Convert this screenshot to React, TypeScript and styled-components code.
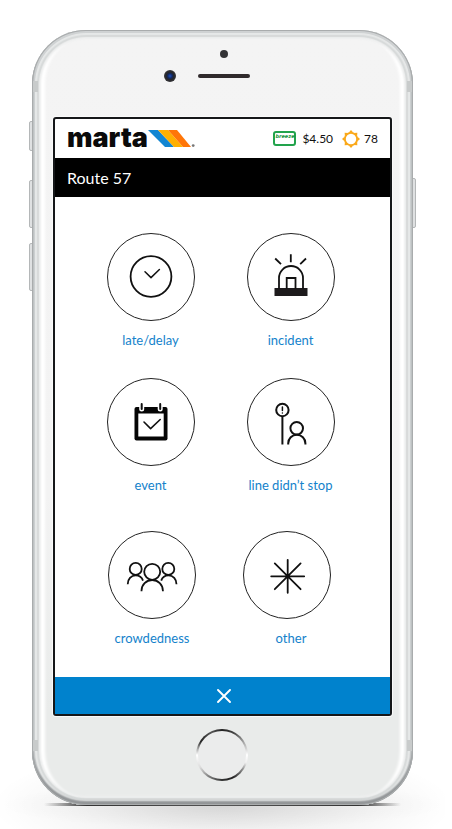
import React from "react";
import styled, { createGlobalStyle, css } from "styled-components";

const GlobalStyle = createGlobalStyle`
  *, *::before, *::after { box-sizing: border-box; }
  body { margin: 0; background: #fff; }
`;

const sans = css`
  font-family: Lato, "Open Sans", sans-serif;
`;

const Page = styled.div`
  ${sans}
  display: flex;
  justify-content: center;
  padding: 30px 39px 24px 32px;
  overflow: hidden;
`;

const Phone = styled.div`
  position: relative;
  flex: 1;
  max-width: 440px;

  &::before {
    content: "";
    position: absolute;
    inset: auto -32px -24px -32px;
    height: 90px;
    background:
      radial-gradient(ellipse 50% 24px at 50% 66px, rgba(0, 0, 0, 0.07), transparent) 0 0 / 100% 100% no-repeat,
      radial-gradient(ellipse 52% 60px at 50% 66px, rgba(0, 0, 0, 0.1), transparent);
  }

  &::after {
    content: "";
    position: absolute;
    inset: auto 12px -1px 12px;
    height: 3px;
    background: linear-gradient(90deg, transparent, #333 12%, #555 50%, #333 88%, transparent);
  }
`;

const SideButton = styled.span<{ $top: number; $length: number; $right?: boolean }>`
  position: absolute;
  top: ${(p) => p.$top}px;
  ${(p) => (p.$right ? "right" : "left")}: -3px;
  width: 5px;
  height: ${(p) => p.$length}px;
  border: 1px solid #b4b7b8;
  border-radius: 2px;
  background: #dfe1e2;
`;

const Shell = styled.div`
  position: relative;
  z-index: 1;
  padding: 0 21px;
  border-radius: 54px;
  background: linear-gradient(#f4f4f4 0, #f3f3f3 60%, #e9ebea 88%);
  box-shadow:
    inset 0 0 0 1px #a9acad,
    inset 0 -3px 2px 1px #929597,
    inset 0 0 0 3px #cfd2d3,
    inset 0 0 1px 5px #e6e8e8,
    inset 0 0 1px 7px #d6d9d9,
    inset 0 0 2px 9px #eeefef,
    inset 10px 0 3px 3px #fff,
    inset -10px 0 3px 3px #fff;
`;

const Antenna = styled.span<{ $right?: boolean; $bottom?: boolean }>`
  position: absolute;
  ${(p) => (p.$bottom ? "bottom: 54px" : "top: 51px")};
  ${(p) => (p.$right ? "right" : "left")}: 1px;
  width: 5px;
  height: 11px;
  background: #c8cbcb;
`;

const TopBezel = styled.div`
  display: flex;
  flex-direction: column;
  align-items: center;
  gap: 12px;
  height: 87px;
  padding: 20px 0 0 2px;
`;

const Sensor = styled.span`
  width: 8px;
  height: 8px;
  border-radius: 50%;
  background: #333336;
`;

const SpeakerRow = styled.div`
  display: grid;
  grid-template-columns: 1fr 52px 1fr;
  align-items: center;
  gap: 22px;
  width: 100%;
`;

const Camera = styled.span`
  justify-self: end;
  width: 12px;
  height: 12px;
  border-radius: 50%;
  background: radial-gradient(circle, #1f4fc0 0, #12285f 28%, #26262a 45%, #46464a 100%);
`;

const Speaker = styled.span`
  height: 4px;
  border-radius: 2px;
  background: #302a2c;
`;

const Screen = styled.div`
  display: flex;
  flex-direction: column;
  border: 2px solid #151719;
  border-radius: 3px;
  background: #fff;
  box-shadow: 0 0 0 1px #fafafa;
`;

const Header = styled.header`
  display: flex;
  align-items: center;
  justify-content: space-between;
  height: 39px;
  padding: 0 12px;
`;

const Brand = styled.div`
  display: flex;
  align-items: center;
`;

const BrandName = styled.span`
  font: 900 27px/34px Inter, "Liberation Sans", sans-serif;
  color: #0a0a0a;
  height: 36px;
`;

const Status = styled.div`
  display: flex;
  align-items: center;
  gap: 9px;
  font-size: 12px;
  line-height: 20px;
  color: #111;
`;

const Reading = styled.span<{ $gap: number }>`
  display: flex;
  align-items: center;
  gap: ${(p) => p.$gap}px;
`;

const BreezeCard = styled.span`
  width: 23px;
  height: 15px;
  border: 2px solid #22a34c;
  border-radius: 3px;
  font: italic 700 5px/7px "DejaVu Sans", sans-serif;
  text-align: center;
  color: #15953d;
`;

const RouteBar = styled.h1`
  margin: 0;
  padding: 0 12px;
  background: #000;
  color: #fff;
  font-size: 16px;
  font-weight: 400;
  line-height: 39px;
`;

const Main = styled.main`
  display: flex;
  flex-direction: column;
  align-items: center;
  gap: 28px;
  min-height: 480px;
  padding: 36px 4px 28px 0;
`;

const Row = styled.div<{ $close?: boolean }>`
  display: flex;
  gap: ${(p) => (p.$close ? 47 : 52)}px;
  padding: ${(p) => (p.$close ? "8px 2px 0 0" : "0")};
`;

const Report = styled.button<{ $wide?: boolean }>`
  ${sans}
  display: flex;
  flex-direction: column;
  align-items: ${(p) => (p.$wide ? "flex-start" : "center")};
  gap: 9px;
  width: 88px;
  padding: 0;
  border: 0;
  background: none;
  cursor: pointer;
`;

const Disc = styled.span`
  display: grid;
  place-items: center;
  width: 88px;
  height: 88px;
  border: 1px solid #222;
  border-radius: 50%;
`;

const Label = styled.span<{ $wide?: boolean }>`
  width: ${(p) => (p.$wide ? "96px" : "auto")};
  text-align: center;
  white-space: nowrap;
  font-size: 13px;
  line-height: 20px;
  color: #1482cb;
`;

const CloseBar = styled.button`
  display: grid;
  place-items: center;
  height: 37px;
  padding: 0 0 0 2px;
  border: 0;
  background: #0082cd;
  cursor: pointer;
`;

const BottomBezel = styled.div`
  display: flex;
  justify-content: center;
  height: 89px;
  padding: 13px 2px 0 0;
`;

const HomeButton = styled.button`
  width: 52px;
  height: 52px;
  padding: 0;
  border: 2px solid transparent;
  border-radius: 50%;
  background:
    linear-gradient(#ebecec, #ebecec) padding-box,
    conic-gradient(#222 0, #444 8%, #aaa 17%, #fff 25%, #eee 30%, #888 35%, #222 43%, #333 50%, #777 58%, #ddd 67%, #fff 75%, #aaa 79%, #222 84%, #555 93%, #222 100%) border-box;
`;

type IconProps = { children: React.ReactNode };

const Icon = ({ children }: IconProps) => (
  <svg
    width="60"
    height="60"
    viewBox="14 14 60 60"
    fill="none"
    stroke="#111"
    strokeWidth="1.8"
    strokeLinecap="round"
    strokeLinejoin="round"
    aria-hidden="true"
  >
    {children}
  </svg>
);

const LateIcon = () => (
  <Icon>
    <circle cx="44" cy="43.5" r="20.4" />
    <path d="M38 38.8 44 44.6 52.4 36.5" strokeWidth="1.5" />
  </Icon>
);

const IncidentIcon = () => (
  <Icon>
    <path d="M27.5 55h33v8h-33z" fill="#1d1a1c" stroke="none" />
    <path d="M32 55V45a12 12 0 0 1 24 0v10M39.7 55V45h8.8v10" strokeLinejoin="miter" />
    <path d="M28.2 25.5 34 31.2M43.8 21.2v8M59 25.5l-5.8 5.7" strokeLinecap="butt" />
  </Icon>
);

const EventIcon = () => (
  <Icon>
    <rect x="27.5" y="29" width="33" height="33.5" rx="2" fill="#050505" stroke="none" />
    <path d="M31.3 35.5h25.4v23H31.3z" fill="#fff" stroke="none" />
    <path d="M34.7 26v5M53.2 26v5" stroke="#fff" strokeWidth="5" />
    <path d="M34.7 26v5M53.2 26v5" strokeWidth="2" />
    <path d="m37 44 6.6 6.6L53.2 41.5" strokeWidth="1.6" />
  </Icon>
);

const StopIcon = () => (
  <Icon>
    <circle cx="35.4" cy="32" r="6.2" strokeWidth="2" />
    <path d="M35.4 38.2v28.3" strokeLinecap="butt" strokeWidth="2" />
    <path d="M35.4 29v3.4M35.4 34.9v.1" strokeWidth="1.5" />
    <circle cx="49.7" cy="50.3" r="6.3" strokeWidth="2" />
    <path d="M41.2 66.4v-1a8.6 8.6 0 0 1 17.2 0v1" strokeLinecap="butt" strokeWidth="2" />
  </Icon>
);

const CrowdIcon = () => (
  <Icon>
    <circle cx="44.2" cy="40.8" r="8" />
    <circle cx="27.7" cy="37.9" r="6" />
    <circle cx="60.3" cy="37.9" r="6" />
    <path d="M33.5 60.2v-.5a10.7 10.7 0 0 1 21.4 0v.5" strokeLinecap="butt" />
    <path d="M19.7 53.2c0-5 3.4-8.8 8-8.8 3.5 0 6.2 2 7.3 5.2M68.5 53.2c0-5-3.4-8.8-8-8.8-3.5 0-6.2 2-7.3 5.2" strokeLinecap="butt" />
  </Icon>
);

const OtherIcon = () => (
  <Icon>
    <path d="M44.7 28.8v33M28.2 45.3h33M31.8 32.4l25.8 25.8M57.6 32.4 31.8 58.2" />
    <circle cx="44.7" cy="45.3" r="2" fill="#111" stroke="none" />
  </Icon>
);

const BrandStripes = () => (
  <svg width="48" height="18" viewBox="0 0 48 18" aria-hidden="true">
    <path d="M0 0h10l16 17h-9z" fill="#1386d2" />
    <path d="M10 0h10l15 17h-9z" fill="#ffb000" />
    <path d="M20 0h9l14 17h-8z" fill="#ff7608" />
    <circle cx="45.2" cy="15.6" r="1.4" fill="#777" />
  </svg>
);

const rays = [0, 45, 90, 135, 180, 225, 270, 315];

const SunIcon = () => (
  <svg width="18" height="18" viewBox="-9 -9 18 18" aria-hidden="true">
    <circle r="6.1" fill="none" stroke="#faa819" strokeWidth="1.8" />
    {rays.map((angle) => (
      <path key={angle} d="M-2.4-6.2 0-9 2.4-6.2z" fill="#faa819" transform={`rotate(${angle})`} />
    ))}
  </svg>
);

const CloseIcon = () => (
  <svg width="14" height="14" viewBox="0 0 14 14" stroke="#fff" strokeWidth="1.9" strokeLinecap="round" aria-hidden="true">
    <path d="M1 1l12 12M13 1 1 13" />
  </svg>
);

type ReportButtonProps = { label: string; wide?: boolean; children: React.ReactNode };

const ReportButton = ({ label, wide, children }: ReportButtonProps) => (
  <Report type="button" $wide={wide}>
    <Disc>{children}</Disc>
    <Label $wide={wide}>{label}</Label>
  </Report>
);

export default function App() {
  return (
    <>
      <GlobalStyle />
      <Page>
        <Phone>
          <SideButton $top={91} $length={30} />
          <SideButton $top={150} $length={48} />
          <SideButton $top={213} $length={48} />
          <SideButton $top={148} $length={50} $right />
          <Shell>
            <Antenna />
            <Antenna $right />
            <Antenna $bottom />
            <Antenna $right $bottom />
            <TopBezel>
              <Sensor />
              <SpeakerRow>
                <Camera />
                <Speaker />
              </SpeakerRow>
            </TopBezel>
            <Screen>
              <Header>
                <Brand>
                  <BrandName>marta</BrandName>
                  <BrandStripes />
                </Brand>
                <Status>
                  <Reading $gap={6}>
                    <BreezeCard>breeze</BreezeCard>
                    <span>$4.50</span>
                  </Reading>
                  <Reading $gap={4}>
                    <SunIcon />
                    <span>78</span>
                  </Reading>
                </Status>
              </Header>
              <RouteBar>Route 57</RouteBar>
              <Main>
                <Row>
                  <ReportButton label="late/delay"><LateIcon /></ReportButton>
                  <ReportButton label="incident"><IncidentIcon /></ReportButton>
                </Row>
                <Row>
                  <ReportButton label="event"><EventIcon /></ReportButton>
                  <ReportButton label="line didn’t stop"><StopIcon /></ReportButton>
                </Row>
                <Row $close>
                  <ReportButton label="crowdedness"><CrowdIcon /></ReportButton>
                  <ReportButton label="other" wide><OtherIcon /></ReportButton>
                </Row>
              </Main>
              <CloseBar type="button" aria-label="Close"><CloseIcon /></CloseBar>
            </Screen>
            <BottomBezel>
              <HomeButton type="button" aria-label="Home" />
            </BottomBezel>
          </Shell>
        </Phone>
      </Page>
    </>
  );
}
